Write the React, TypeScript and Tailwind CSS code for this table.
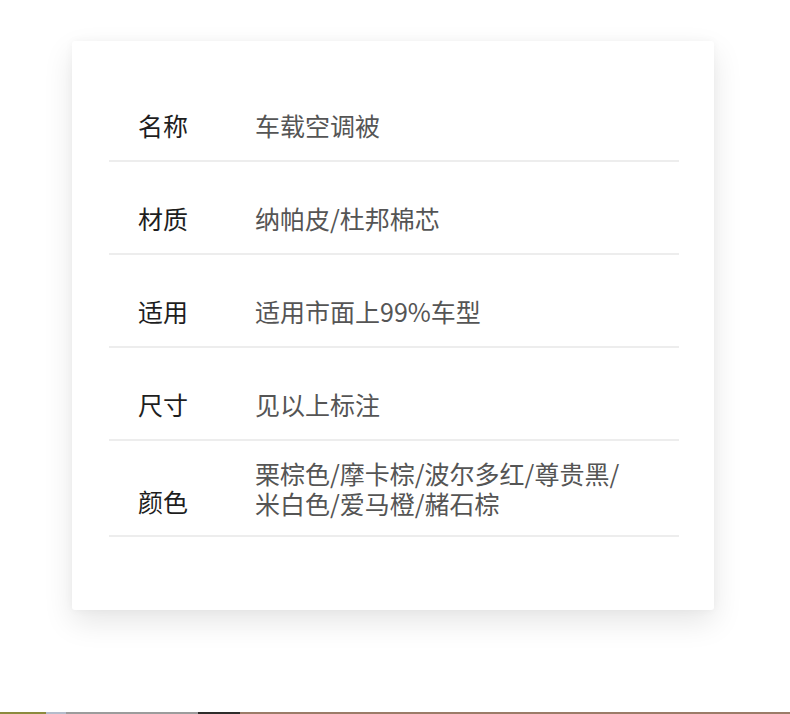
import React from "react";

const rows: { label: string; value: string[] }[] = [
  { label: "名称", value: ["车载空调被"] },
  { label: "材质", value: ["纳帕皮/杜邦棉芯"] },
  { label: "适用", value: ["适用市面上99%车型"] },
  { label: "尺寸", value: ["见以上标注"] },
];

export default function App() {
  return (
    <div
      className="relative flex h-[714px] w-[790px] flex-col overflow-hidden bg-white"
      style={{ fontFamily: '"Noto Sans CJK SC", "Noto Sans", sans-serif' }}
    >
      <div className="ml-[72px] mt-[41px] h-[569px] w-[642px] rounded-[3px] bg-white pl-[37px] pr-[35px] pt-[28px] shadow-[0_12px_30px_rgba(0,0,0,0.1),0_0_8px_rgba(0,0,0,0.04)]">
        {rows.map((r) => (
          <div
            key={r.label}
            className="flex border-b-2 border-[#ededed] pb-[19px] pl-[29px] pt-[40px] text-[25px] leading-[32px]"
          >
            <div className="w-[117px] text-[#1e1e1e]">{r.label}</div>
            <div className="text-[#555555]">{r.value[0]}</div>
          </div>
        ))}
        <div className="flex border-b-2 border-[#ededed] pb-[17px] pl-[29px] pt-[17px] text-[25px] leading-[30px]">
          <div className="w-[117px] pt-[28px] text-[#1e1e1e]">颜色</div>
          <div className="text-[#555555]">
            <div>栗棕色/摩卡棕/波尔多红/尊贵黑/</div>
            <div>米白色/爱马橙/赭石棕</div>
          </div>
        </div>
      </div>
      <div className="mt-auto flex h-[2px] w-full">
        <div className="w-[46px] bg-[#8c8a3e]" />
        <div className="w-[20px] bg-[#b4bccb]" />
        <div className="w-[132px] bg-[#9c9c9c]" />
        <div className="w-[42px] bg-[#2f2d2b]" />
        <div className="flex-1 bg-[#9b7c68]" />
      </div>
    </div>
  );
}
